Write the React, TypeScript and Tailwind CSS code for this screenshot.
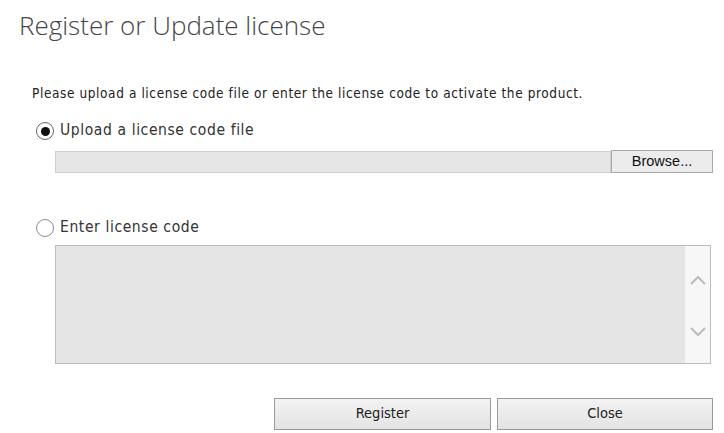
export default function App() {
  return (
    <div className="w-[724px] h-[433px] bg-white overflow-hidden text-[#333]" style={{ fontFamily: '"DejaVu Sans", sans-serif' }}>
      <h1 className="pl-[19px] pt-[7px] text-[26px] leading-[36px] font-light text-[#444]" style={{ fontFamily: '"Open Sans", "Noto Sans", sans-serif' }}>
        Register or Update license
      </h1>

      <p className="mt-[42px] pl-[32px] text-[13.5px] leading-[16px] text-[#222]" style={{ fontFamily: '"DejaVu Sans Condensed", "DejaVu Sans", sans-serif', letterSpacing: '0.6px' }}>
        Please upload a license code file or enter the license code to activate the product.
      </p>

      <div className="mt-[20px] pl-[36px] flex items-center gap-[6px] h-[20px]">
        <span className="w-[18px] h-[18px] rounded-full border border-[#666] bg-white flex items-center justify-center">
          <span className="w-[9px] h-[9px] rounded-full bg-[#111]" />
        </span>
        <span className="text-[15.5px] text-[#333]" style={{ fontFamily: '"DejaVu Sans Condensed", "DejaVu Sans", sans-serif', letterSpacing: '0.6px' }}>Upload a license code file</span>
      </div>

      <div className="mt-[10px] ml-[55px] w-[658px] h-[22px] flex">
        <div className="flex-1 bg-[#e6e6e6] border border-[#cfcfcf]" />
        <button className="w-[102px] h-[23px] -mt-px bg-[#ececec] border border-[#aaa] text-[14.5px] text-[#111] leading-none" style={{ fontFamily: '"Liberation Sans", Arial, sans-serif' }}>
          Browse...
        </button>
      </div>

      <div className="mt-[45px] pl-[36px] flex items-center gap-[6px] h-[20px]">
        <span className="w-[18px] h-[18px] rounded-full border border-[#8a8a8a] bg-white" />
        <span className="text-[15.5px] text-[#333]" style={{ fontFamily: '"DejaVu Sans Condensed", "DejaVu Sans", sans-serif', letterSpacing: '0.6px' }}>Enter license code</span>
      </div>

      <div className="mt-[7px] ml-[55px] w-[656px] h-[119px] border border-[#bdbdbd] bg-[#e5e5e5] flex">
        <div className="flex-1" />
        <div className="w-[25px] bg-[#f7f7f7] flex flex-col items-center justify-between pt-[29px] pb-[26px]">
          <svg width="16" height="10" viewBox="0 0 16 10" fill="none" stroke="#bcbcbc" strokeWidth="2">
            <path d="M1 9 L8 2 L15 9" />
          </svg>
          <svg width="16" height="10" viewBox="0 0 16 10" fill="none" stroke="#bcbcbc" strokeWidth="2">
            <path d="M1 1 L8 8 L15 1" />
          </svg>
        </div>
      </div>

      <div className="mt-[34px] ml-[274px] flex gap-[6px]">
        <button className="w-[217px] h-[32px] border border-[#9a9a9a] bg-gradient-to-b from-[#f3f3f3] to-[#e3e3e3] text-[14.5px] text-[#222]" style={{ fontFamily: '"DejaVu Sans Condensed", "DejaVu Sans", sans-serif' }}>
          Register
        </button>
        <button className="w-[216px] h-[32px] border border-[#9a9a9a] bg-gradient-to-b from-[#f3f3f3] to-[#e3e3e3] text-[14.5px] text-[#222]" style={{ fontFamily: '"DejaVu Sans Condensed", "DejaVu Sans", sans-serif' }}>
          Close
        </button>
      </div>
    </div>
  )
}
